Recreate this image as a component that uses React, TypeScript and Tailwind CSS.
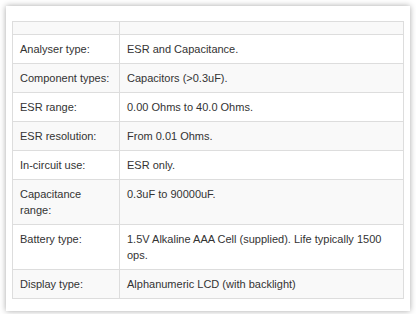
import React from 'react';

const specs: [string, string][] = [
  ['Analyser type:', 'ESR and Capacitance.'],
  ['Component types:', 'Capacitors (>0.3uF).'],
  ['ESR range:', '0.00 Ohms to 40.0 Ohms.'],
  ['ESR resolution:', 'From 0.01 Ohms.'],
  ['In-circuit use:', 'ESR only.'],
  ['Capacitance range:', '0.3uF to 90000uF.'],
  ['Battery type:', '1.5V Alkaline AAA Cell (supplied). Life typically 1500 ops.'],
  ['Display type:', 'Alphanumeric LCD (with backlight)'],
];

export default function App() {
  return (
    <div className="w-[416px] h-[314px] bg-white p-[6px] font-['Liberation_Sans',Arial,sans-serif]">
      <div className="bg-white shadow-[0_0_6px_rgba(0,0,0,0.35)] pt-[15px] pb-[12px] px-[6px]">
        <table className="w-full border-collapse border border-[#dddddd] text-[11px] leading-[16px] text-[#333333]">
          <tbody>
            <tr className="bg-[#f9f9f9]">
              <td className="w-[107px] border border-[#dddddd] px-[7px] py-[6px]"></td>
              <td className="border border-[#dddddd] px-[7px] py-[6px]"></td>
            </tr>
            {specs.map(([label, value], i) => (
              <tr key={label} className={i % 2 === 1 ? 'bg-[#f9f9f9]' : 'bg-white'}>
                <td className="w-[107px] border border-[#dddddd] px-[7px] py-[6px] align-top">{label}</td>
                <td className="border border-[#dddddd] px-[7px] py-[6px] align-top">{value}</td>
              </tr>
            ))}
          </tbody>
        </table>
      </div>
    </div>
  );
}
